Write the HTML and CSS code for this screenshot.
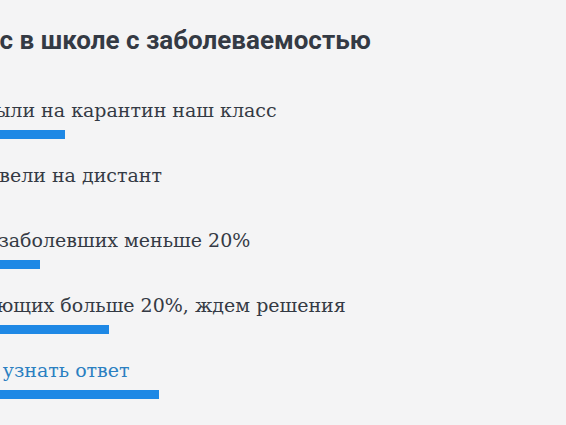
FILE: index.html
```html
<!DOCTYPE html>
<html lang="ru">
<head>
  <meta charset="UTF-8" />
  <meta name="viewport" content="width=device-width, initial-scale=1" />
  <title>Опрос</title>
  <link rel="stylesheet" href="styles.css">
</head>
<body>
  <div class="poll">
    <h1 class="poll-title">У вас в школе с заболеваемостью</h1>
    <ul class="poll-options">
      <li class="option">
        <div class="option-text">Закрыли на карантин наш класс</div>
        <div class="bar" style="width: 117px;"></div>
      </li>
      <li class="option">
        <div class="option-text">Перевели на дистант</div>
        <div class="bar" style="width: 0;"></div>
      </li>
      <li class="option">
        <div class="option-text">Нет, заболевших меньше 20%</div>
        <div class="bar" style="width: 92px;"></div>
      </li>
      <li class="option">
        <div class="option-text">Болеющих больше 20%, ждем решения</div>
        <div class="bar" style="width: 161px;"></div>
      </li>
      <li class="option option-link">
        <a class="option-text" href="#">Хочу узнать ответ</a>
        <div class="bar" style="width: 211px;"></div>
      </li>
    </ul>
  </div>
</body>
</html>
```

FILE: styles.css
```css
body {
  margin: 0;
  background-color: #f4f4f5;
  color: #343a44;
  overflow: hidden;
}
.poll {
  margin-left: -52px;
  padding-top: 23px;
}
.poll-title {
  font-family: Roboto, 'Liberation Sans', sans-serif;
  font-weight: 700;
  font-size: 26px;
  line-height: 34px;
  margin: 0 0 41px;
  white-space: nowrap;
}
.poll-options {
  list-style: none;
  margin: 0;
  padding: 0;
}
.option {
  height: 65px;
}
.option-text {
  display: block;
  font-family: 'DejaVu Serif', 'Liberation Serif', serif;
  font-size: 19px;
  line-height: 24px;
  white-space: nowrap;
}
.option-link .option-text {
  color: #2a7fc1;
  text-decoration: none;
}
.bar {
  height: 9px;
  margin-top: 8px;
  background-color: #1e88e5;
}
```
